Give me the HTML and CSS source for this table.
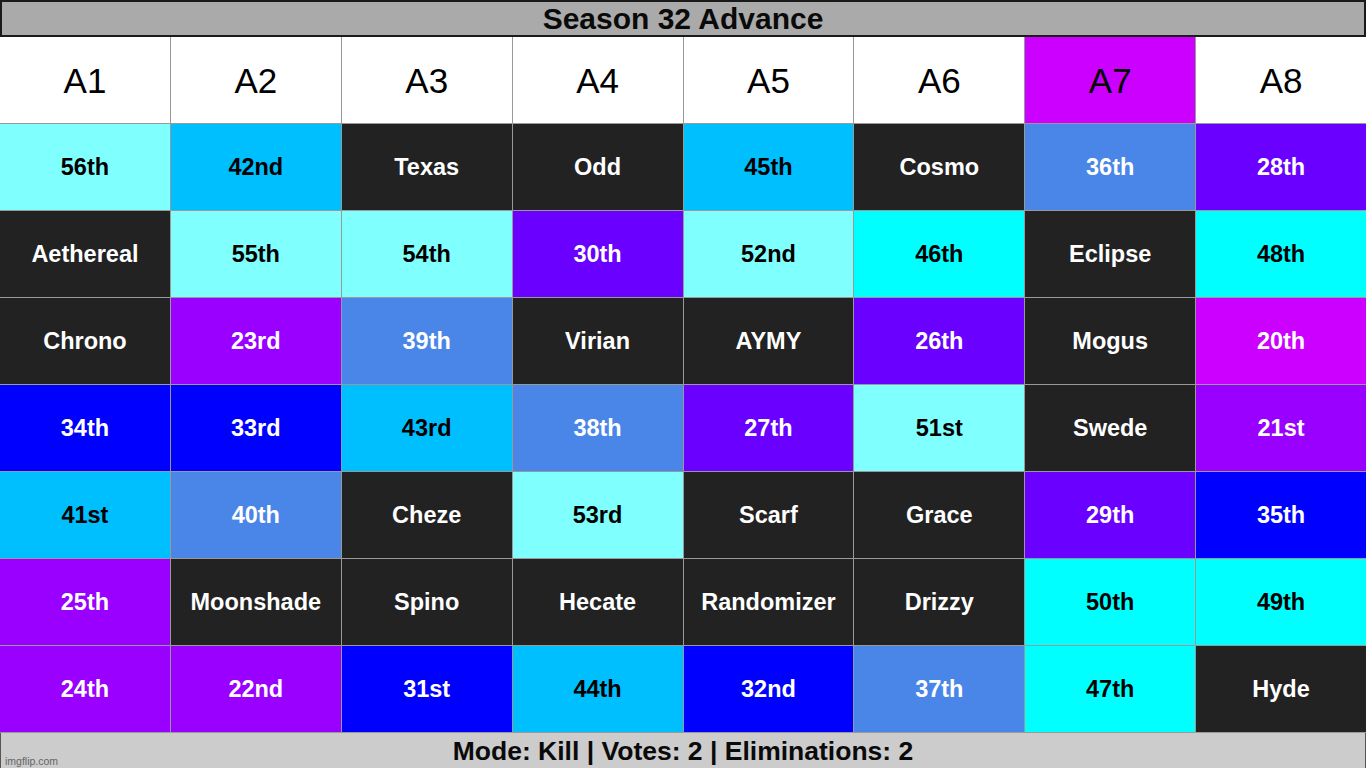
FILE: index.html
```html
<!DOCTYPE html>
<html>
<head>
<meta charset="utf-8">
<link rel="stylesheet" href="styles.css">
</head>
<body>
<div class="board">
  <div class="title">Season 32 Advance</div>
  <div class="grid">
    <div class="cell head">A1</div>
    <div class="cell head">A2</div>
    <div class="cell head">A3</div>
    <div class="cell head">A4</div>
    <div class="cell head">A5</div>
    <div class="cell head">A6</div>
    <div class="cell head head-mag">A7</div>
    <div class="cell head">A8</div>

    <div class="cell lc">56th</div>
    <div class="cell sky">42nd</div>
    <div class="cell dark">Texas</div>
    <div class="cell dark">Odd</div>
    <div class="cell sky">45th</div>
    <div class="cell dark">Cosmo</div>
    <div class="cell corn">36th</div>
    <div class="cell purple">28th</div>

    <div class="cell dark">Aethereal</div>
    <div class="cell lc">55th</div>
    <div class="cell lc">54th</div>
    <div class="cell purple">30th</div>
    <div class="cell lc">52nd</div>
    <div class="cell cyan">46th</div>
    <div class="cell dark">Eclipse</div>
    <div class="cell cyan">48th</div>

    <div class="cell dark">Chrono</div>
    <div class="cell violet">23rd</div>
    <div class="cell corn">39th</div>
    <div class="cell dark">Virian</div>
    <div class="cell dark">AYMY</div>
    <div class="cell purple">26th</div>
    <div class="cell dark">Mogus</div>
    <div class="cell mag">20th</div>

    <div class="cell blue">34th</div>
    <div class="cell blue">33rd</div>
    <div class="cell sky">43rd</div>
    <div class="cell corn">38th</div>
    <div class="cell purple">27th</div>
    <div class="cell lc">51st</div>
    <div class="cell dark">Swede</div>
    <div class="cell violet">21st</div>

    <div class="cell sky">41st</div>
    <div class="cell corn">40th</div>
    <div class="cell dark">Cheze</div>
    <div class="cell lc">53rd</div>
    <div class="cell dark">Scarf</div>
    <div class="cell dark">Grace</div>
    <div class="cell purple">29th</div>
    <div class="cell blue">35th</div>

    <div class="cell violet">25th</div>
    <div class="cell dark">Moonshade</div>
    <div class="cell dark">Spino</div>
    <div class="cell dark">Hecate</div>
    <div class="cell dark">Randomizer</div>
    <div class="cell dark">Drizzy</div>
    <div class="cell cyan">50th</div>
    <div class="cell cyan">49th</div>

    <div class="cell violet">24th</div>
    <div class="cell violet">22nd</div>
    <div class="cell blue">31st</div>
    <div class="cell sky">44th</div>
    <div class="cell blue">32nd</div>
    <div class="cell corn">37th</div>
    <div class="cell cyan">47th</div>
    <div class="cell dark">Hyde</div>
  </div>
  <div class="footer">
    Mode: Kill | Votes: 2 | Eliminations: 2
    <span class="watermark">imgflip.com</span>
  </div>
</div>
</body>
</html>
```

FILE: styles.css
```css
html, body {
  margin: 0;
  padding: 0;
  background: #ffffff;
}

.board {
  width: 1366px;
  height: 768px;
  display: flex;
  flex-direction: column;
  font-family: "Liberation Sans", Arial, sans-serif;
  overflow: hidden;
}

.title {
  box-sizing: border-box;
  height: 37px;
  border: 2px solid #1a1a1a;
  background: #aaaaaa;
  color: #0a0a0a;
  font-weight: bold;
  font-size: 30px;
  line-height: 33px;
  text-align: center;
}

.grid {
  display: grid;
  grid-template-columns: repeat(8, 1fr);
  grid-auto-rows: 86px;
  gap: 1px;
  background: #999999;
  border-bottom: 1px solid #999999;
}

.cell {
  display: flex;
  align-items: center;
  justify-content: center;
  font-weight: bold;
  font-size: 23.5px;
  color: #ffffff;
}

.head {
  background: #ffffff;
  color: #000000;
  font-weight: normal;
  font-size: 35px;
  padding-top: 2px;
}

.head-mag {
  background: #cc00ff;
}

.lc { background: #80ffff; color: #000000; }
.sky { background: #00bfff; color: #000000; }
.cyan { background: #00ffff; color: #000000; }
.dark { background: #222222; }
.corn { background: #4a86e8; }
.purple { background: #6a00ff; }
.violet { background: #9900ff; }
.mag { background: #cc00ff; }
.blue { background: #0000ff; }

.footer {
  position: relative;
  flex: 1;
  box-sizing: border-box;
  background: #cccccc;
  border-left: 1px solid #555555;
  border-right: 1px solid #555555;
  border-bottom: 1px solid #555555;
  color: #0a0a0a;
  font-weight: bold;
  font-size: 26.5px;
  line-height: 36px;
  text-align: center;
}

.watermark {
  position: absolute;
  left: 4px;
  bottom: 2px;
  font-size: 10.5px;
  font-weight: normal;
  line-height: 12px;
  color: #666666;
}
```
